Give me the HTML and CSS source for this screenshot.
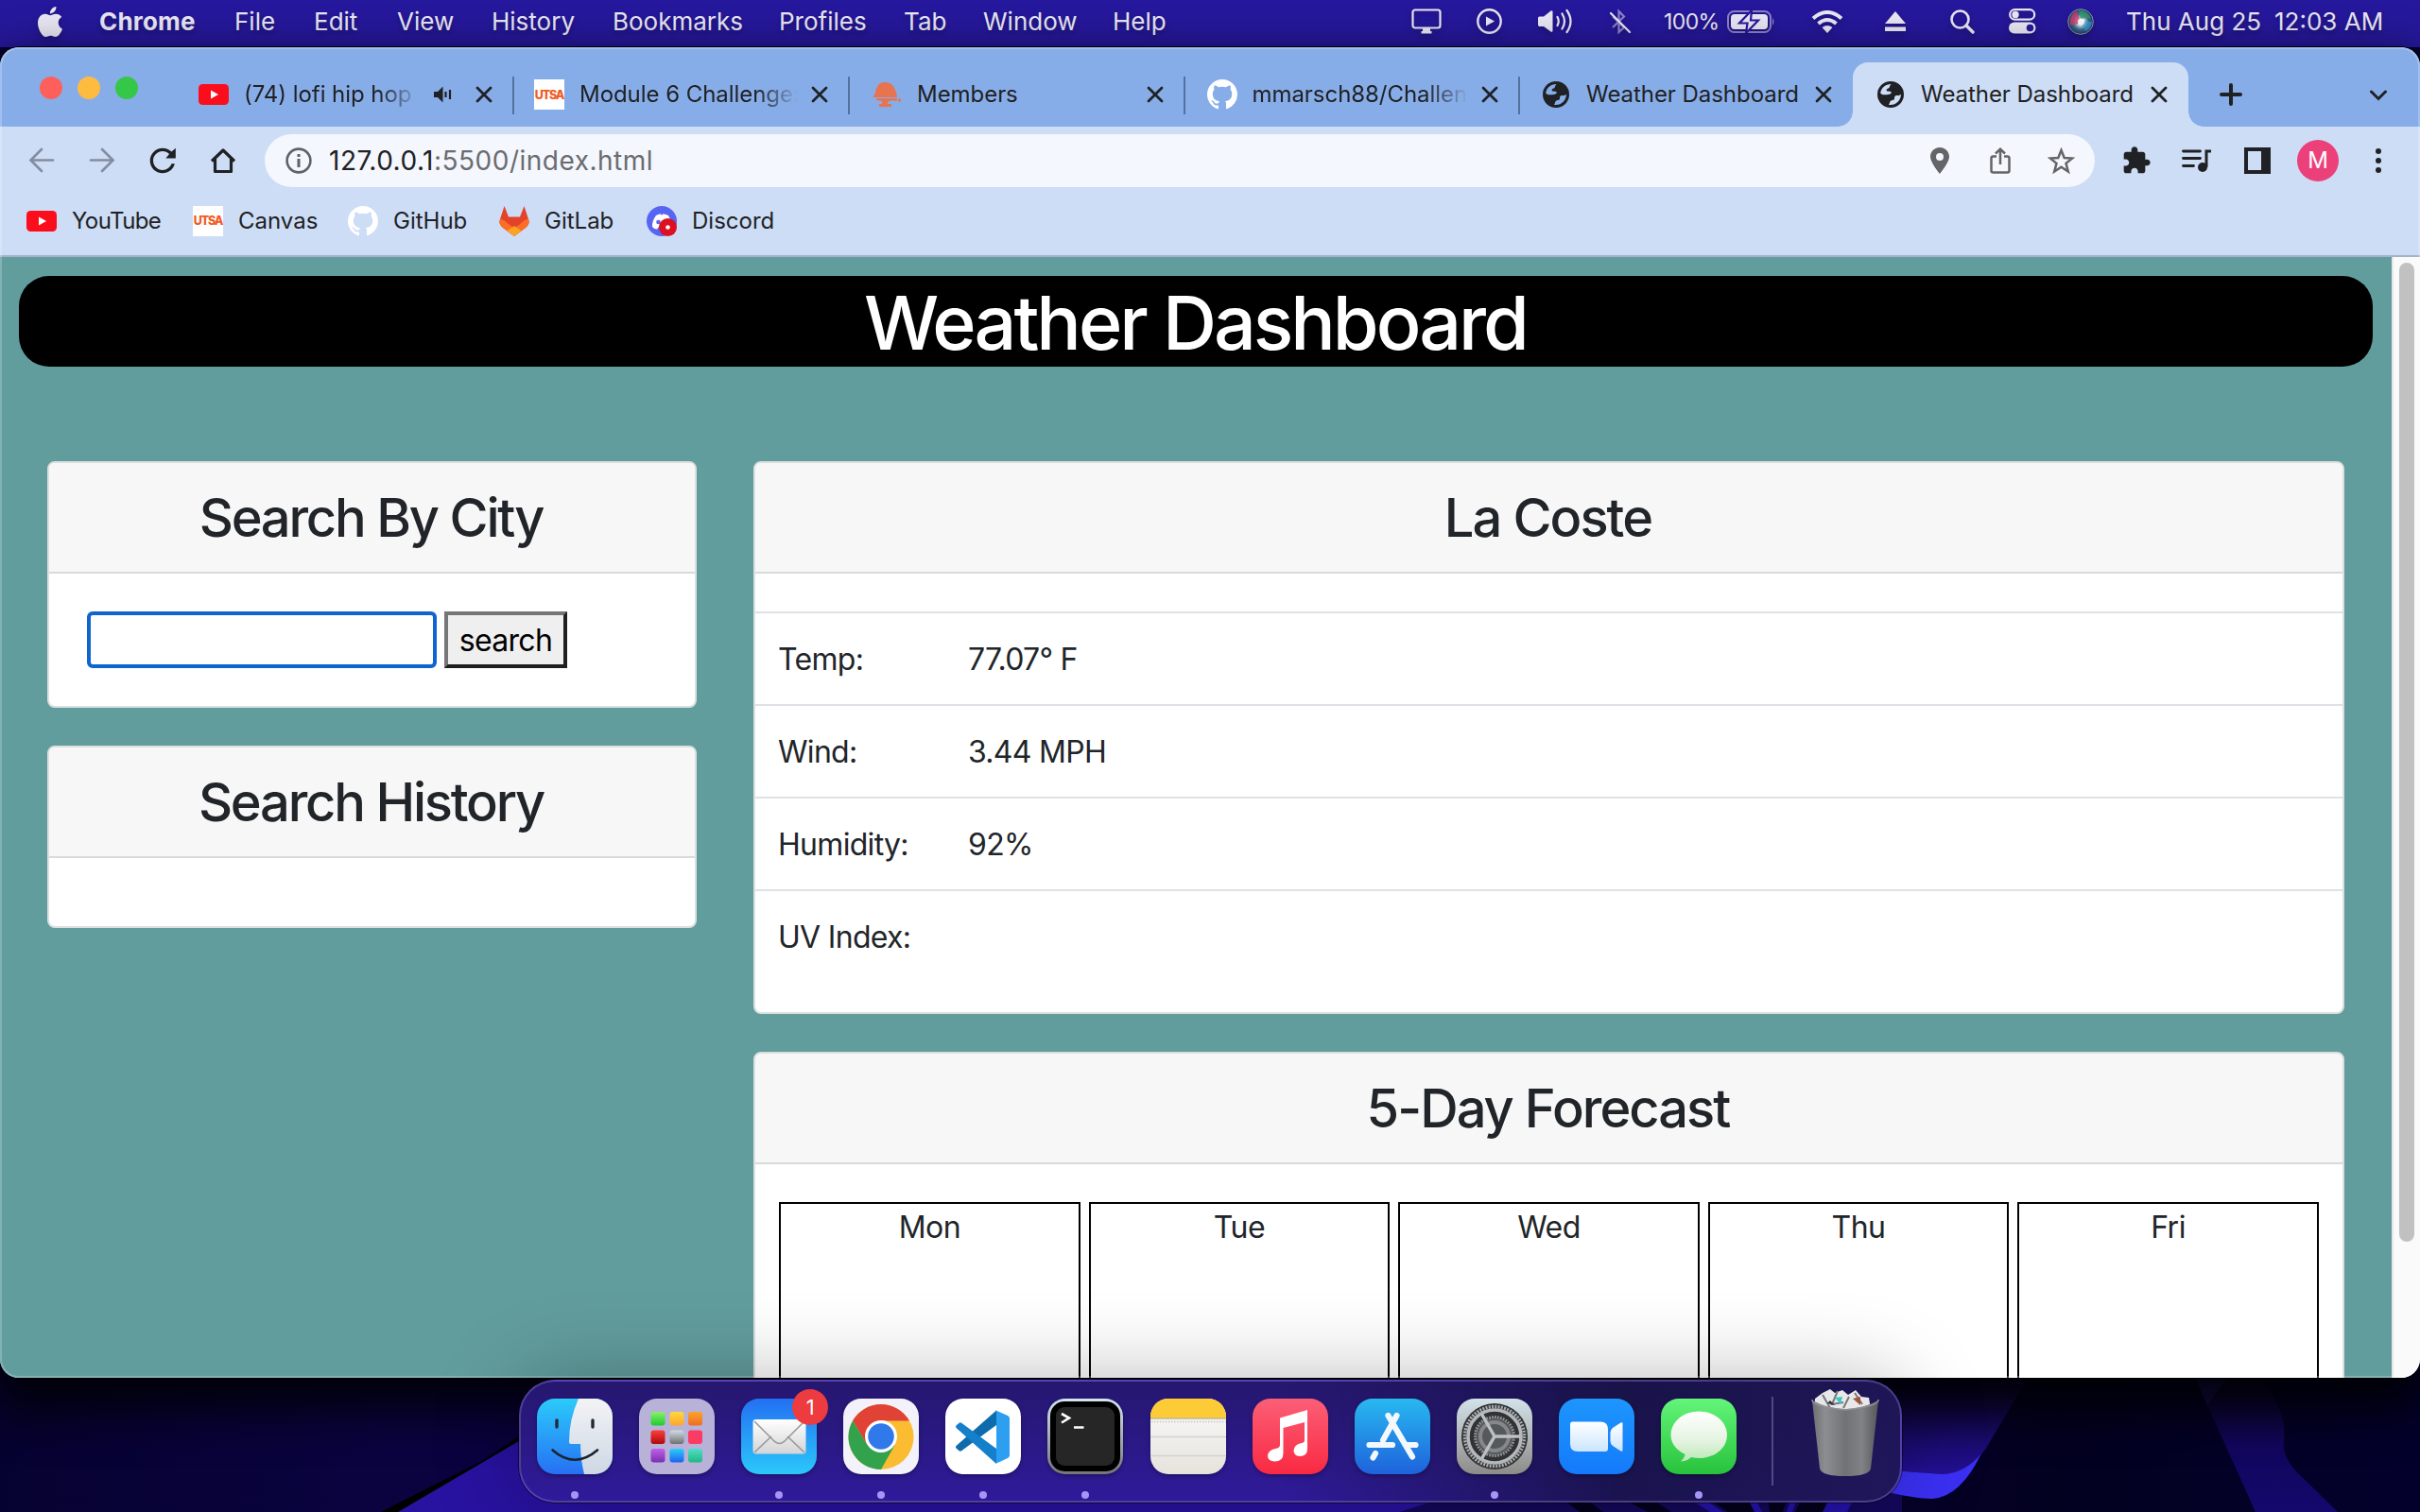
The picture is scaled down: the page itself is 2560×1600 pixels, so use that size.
FILE: index.html
```html
<!DOCTYPE html>
<html lang="en">
<head>
<meta charset="utf-8">
<title>Weather Dashboard</title>
<link rel="stylesheet" href="styles.css">
</head>
<body>
<svg class="defs" width="0" height="0" aria-hidden="true">
  <defs>
    <linearGradient id="g-violet" x1="0" y1="0" x2="0" y2="1"><stop offset="0" stop-color="#080324"/><stop offset="1" stop-color="#241096"/></linearGradient>
    <linearGradient id="g-band" x1="0" y1="0" x2="0" y2="1"><stop offset="0" stop-color="#0a0424"/><stop offset=".5" stop-color="#11065c"/><stop offset="1" stop-color="#14086c"/></linearGradient>
    <linearGradient id="g-finder" x1="0" y1="0" x2="0" y2="1"><stop offset="0" stop-color="#2bcbfb"/><stop offset="1" stop-color="#2670f3"/></linearGradient>
    <linearGradient id="g-face" x1="0" y1="0" x2="0" y2="1"><stop offset="0" stop-color="#f3f3f5"/><stop offset="1" stop-color="#cdd8e4"/></linearGradient>
    <linearGradient id="g-paper" x1="0" y1="0" x2="0" y2="1"><stop offset="0" stop-color="#ffffff"/><stop offset="1" stop-color="#d4d4d6"/></linearGradient>
    <linearGradient id="g-bubble" x1="0" y1="0" x2="0" y2="1"><stop offset="0" stop-color="#ffffff"/><stop offset=".6" stop-color="#e4f3e0"/><stop offset="1" stop-color="#b9e8b4"/></linearGradient>
    <linearGradient id="g-cam" x1="0" y1="0" x2="0" y2="1"><stop offset="0" stop-color="#ffffff"/><stop offset="1" stop-color="#cbe5ff"/></linearGradient>
    <linearGradient id="g-bin" x1="0" y1="0" x2="1" y2="0"><stop offset="0" stop-color="#6d6f73"/><stop offset=".2" stop-color="#8c8e92"/><stop offset=".5" stop-color="#707276"/><stop offset=".75" stop-color="#808286"/><stop offset="1" stop-color="#55575b"/></linearGradient>
    <linearGradient id="g-green" x1="0" y1="0" x2="0" y2="1"><stop offset="0" stop-color="#8af06b"/><stop offset="1" stop-color="#1ecb2f"/></linearGradient>
    <linearGradient id="g-yellow" x1="0" y1="0" x2="0" y2="1"><stop offset="0" stop-color="#ffd83c"/><stop offset="1" stop-color="#fba72a"/></linearGradient>
    <linearGradient id="g-orange" x1="0" y1="0" x2="0" y2="1"><stop offset="0" stop-color="#fba32b"/><stop offset="1" stop-color="#ee6d24"/></linearGradient>
    <linearGradient id="g-red" x1="0" y1="0" x2="0" y2="1"><stop offset="0" stop-color="#fb3f3c"/><stop offset="1" stop-color="#b00a0c"/></linearGradient>
    <linearGradient id="g-gray" x1="0" y1="0" x2="0" y2="1"><stop offset="0" stop-color="#cfdde4"/><stop offset="1" stop-color="#707070"/></linearGradient>
    <linearGradient id="g-purple" x1="0" y1="0" x2="0" y2="1"><stop offset="0" stop-color="#c060e8"/><stop offset="1" stop-color="#7a30b0"/></linearGradient>
    <linearGradient id="g-blue" x1="0" y1="0" x2="0" y2="1"><stop offset="0" stop-color="#27d0fb"/><stop offset="1" stop-color="#2060ee"/></linearGradient>
    <linearGradient id="g-teal" x1="0" y1="0" x2="0" y2="1"><stop offset="0" stop-color="#52dcc8"/><stop offset="1" stop-color="#20b882"/></linearGradient>
    <radialGradient id="g-siri"><stop offset="0" stop-color="#ffffff"/><stop offset=".3" stop-color="#c8dce8"/><stop offset=".6" stop-color="#3c6f98"/><stop offset="1" stop-color="#1d3a4a"/></radialGradient>
  </defs>
  <symbol id="i-close" viewBox="0 0 18 18"><path d="M2 2l14 14M16 2L2 16" fill="none" stroke="#202124" stroke-width="2.8" stroke-linecap="round"/></symbol>
  <symbol id="i-youtube" viewBox="0 0 32 22"><rect width="32" height="22" rx="4.5" fill="#fc0d1b"/><path d="M13 6.5l8 4.5-8 4.5z" fill="#fff"/></symbol>
  <symbol id="i-github" viewBox="0 0 16 16"><path fill="#fff" d="M8 0C3.58 0 0 3.58 0 8c0 3.54 2.29 6.53 5.47 7.59.4.07.55-.17.55-.38 0-.19-.01-.82-.01-1.49-2.01.37-2.53-.49-2.69-.94-.09-.23-.48-.94-.82-1.13-.28-.15-.68-.52-.01-.53.63-.01 1.08.58 1.23.82.72 1.21 1.87.87 2.33.66.07-.52.28-.87.51-1.07-1.78-.2-3.64-.89-3.64-3.95 0-.87.31-1.59.82-2.15-.08-.2-.36-1.02.08-2.12 0 0 .67-.21 2.2.82.64-.18 1.32-.27 2-.27s1.36.09 2 .27c1.53-1.04 2.2-.82 2.2-.82.44 1.1.16 1.92.08 2.12.51.56.82 1.27.82 2.15 0 3.07-1.87 3.75-3.65 3.95.29.25.54.73.54 1.48 0 1.07-.01 1.93-.01 2.2 0 .21.15.46.55.38A8.01 8.01 0 0 0 16 8c0-4.42-3.58-8-8-8z"/></symbol>
  <symbol id="i-globe" viewBox="0 0 28 28"><path fill="#202124" fill-rule="evenodd" d="M14 0a14 14 0 1 0 0 28a14 14 0 0 0 0-28zM14.500 3.000C8.500 3 4 7 3.200 12.500C5 14.800 8 14.200 10 14.200C13.500 14.200 15.500 12.600 14.500 11.300C13.500 10.300 10 11.500 9.600 9.500C9.300 7.500 12.500 8 12.800 6.200C13 4.600 14 4 14.500 3zM25 13.500C24 15.500 21.500 15 20.500 15C18.500 15 17.800 16.500 18 18.500C18.200 20.500 14 19.500 13.400 21.500C13 23 12.500 24 12 24.900C19 26 25 20.500 25 13.500z"/></symbol>
</svg>

<div class="desktop">
  <svg class="wallpaper" viewBox="0 1440 2560 160" width="2560" height="160">
    <path d="M403 1600L450 1576Q490 1556 510 1546L640 1460L640 1600z" fill="#000"/>
    <path d="M421 1600L547 1526L660 1458H1700V1600z" fill="#2812a0"/>
    <path d="M1480 1600L1640 1550H2012V1600z" fill="#14085a"/>
    <path d="M1655 1588h25l16 12h-25zM1720 1588h30l18 12h-25zM1810 1588h40l8 12h-30zM1870 1588h20l-4 12h-14zM1905 1588h30l-6 12h-30z" fill="#04021c"/>
    <path d="M1790 1588h15l18 12h-14zM1850 1588h8l6 12h-8zM1894 1588h6l-4 12h-6zM1934 1588h26l-6 12h-26z" fill="#2412a8"/>
    <path d="M1960 1450H2150L2100 1534Q2080 1560 2056 1560L1960 1553z" fill="url(#g-violet)"/>
    <path d="M1960 1553L2056 1560Q2080 1558 2096 1538Q2074 1584 2044 1586Q2020 1586 1960 1570z" fill="#3b30f4"/>
    <path d="M2322 1458L2386 1600H2473L2428 1556Q2414 1540 2416 1526C2418 1505 2415 1492 2392 1458z" fill="url(#g-band)"/>
    <path d="M2322 1458H2356L2335 1487z" fill="#151050"/>
  </svg>

  <header class="menubar">
    <svg class="apple" viewBox="0 0 24 24"><path fill="#e9e7f5" d="M12.152 6.896c-.948 0-2.415-1.078-3.96-1.04-2.04.027-3.91 1.183-4.961 3.014-2.117 3.675-.546 9.103 1.519 12.09 1.013 1.454 2.208 3.09 3.792 3.039 1.52-.065 2.09-.987 3.935-.987 1.831 0 2.35.987 3.96.948 1.637-.026 2.676-1.48 3.676-2.948 1.156-1.688 1.636-3.325 1.662-3.415-.039-.013-3.182-1.221-3.22-4.857-.026-3.04 2.48-4.494 2.597-4.559-1.429-2.09-3.623-2.324-4.39-2.376-2-.156-3.675 1.09-4.61 1.09zM15.53 3.83c.843-1.012 1.4-2.427 1.245-3.83-1.207.052-2.662.805-3.532 1.818-.78.896-1.454 2.338-1.273 3.714 1.338.104 2.715-.688 3.559-1.701"/></svg>
    <nav class="menus">
      <span class="app-name">Chrome</span><span>File</span><span>Edit</span><span>View</span><span>History</span><span>Bookmarks</span><span>Profiles</span><span>Tab</span><span>Window</span><span>Help</span>
    </nav>
    <div class="status">
      <svg width="32" height="27" viewBox="0 0 32 27"><rect x="1.500" y="1.500" width="29" height="19" rx="2.500" fill="none" stroke="#e9e7f5" stroke-width="2.200"/><path d="M12 21h8v3h1.500v2.500h-11V24H12z" fill="#e9e7f5"/></svg>
      <svg width="27" height="27" viewBox="0 0 27 27"><circle cx="13.500" cy="13.500" r="12.200" fill="none" stroke="#e9e7f5" stroke-width="2.400"/><path d="M10 8.500l9 5-9 5z" fill="#e9e7f5"/></svg>
      <svg width="38" height="27" viewBox="0 0 38 27"><path d="M1 10q0-1.500 1.500-1.500H7l7.500-6q2-1 2 1v20q0 2-2 1L7 19H2.500Q1 19 1 17z" fill="#e9e7f5"/><path d="M21.500 9q2.500 4.500 0 9M26.500 5.500q5 8 0 16M31.500 2q8 11.500 0 23" fill="none" stroke="#e9e7f5" stroke-width="2.200" stroke-linecap="round"/></svg>
      <svg width="24" height="28" viewBox="0 0 24 28"><path d="M4 20L16 8.500L10.500 3V25L16 20L4 8.500" fill="none" stroke="#8a80cc" stroke-width="2.200"/><path d="M2 5l20 20" stroke="#e9e7f5" stroke-width="2.200" stroke-linecap="round"/></svg>
      <span class="percent">100%</span>
      <svg width="52" height="24" viewBox="0 0 52 24"><rect x="1" y="1" width="45" height="22" rx="6.500" fill="none" stroke="#8a80cc" stroke-width="2"/><rect x="4" y="4" width="39" height="16" rx="4" fill="#e9e7f5"/><path d="M48 8q3 4 0 8z" fill="#8a80cc"/><path d="M26 0L13 13.500h8.500L20 24 33 10.500h-8z" fill="#e9e7f5" stroke="#26189c" stroke-width="2.200"/></svg>
      <svg width="34" height="24" viewBox="0 0 34 24"><g fill="none" stroke="#e9e7f5" stroke-width="4"><path d="M2 8.500q15-13 30 0"/><path d="M7.500 14q9.500-8 19 0"/></g><path d="M11.500 18q5.500-4 11 0L17 24z" fill="#e9e7f5"/></svg>
      <svg width="24" height="22" viewBox="0 0 24 22"><path d="M12 0l11 13H1zM1 16.500h22V21H1z" fill="#e9e7f5"/></svg>
      <svg width="26" height="26" viewBox="0 0 26 26"><circle cx="10.500" cy="10.500" r="9" fill="none" stroke="#e9e7f5" stroke-width="2.600"/><path d="M17 17l7 7" stroke="#e9e7f5" stroke-width="3.400" stroke-linecap="round"/></svg>
      <svg width="29" height="27" viewBox="0 0 29 27"><rect x="1.200" y="1.200" width="26" height="10.400" rx="5.200" fill="none" stroke="#e9e7f5" stroke-width="2.200"/><circle cx="7" cy="6.400" r="3.700" fill="#e9e7f5"/><rect x="0" y="14.500" width="28.500" height="12" rx="6" fill="#e9e7f5"/><circle cx="22.500" cy="20.500" r="3.800" fill="#26189c"/></svg>
      <svg width="28" height="28" viewBox="0 0 28 28"><circle cx="14" cy="14" r="13.500" fill="url(#g-siri)"/><path d="M3 17Q1 7 10 2.500Q12 8 14 14Q8 19 3 17z" fill="#d63a6c" opacity=".75"/><path d="M12 2Q22 2 25 11Q19 8 14 12z" fill="#2f9a6a" opacity=".8"/><path d="M14 14l12 0q-1 8-7 10z" fill="#3aa5e0" opacity=".6"/><circle cx="14.500" cy="14" r="3.500" fill="#fff" opacity=".9"/><circle cx="14" cy="14" r="13.300" fill="none" stroke="#8f8fc4" stroke-width="1"/></svg>
      <span class="clock-day">Thu Aug 25</span>
      <span class="clock-time">12:03 AM</span>
    </div>
  </header>

  <main class="window">
    <div class="tabstrip">
      <div class="lights"><i class="red"></i><i class="amber"></i><i class="green"></i></div>
      <div class="tabs">
        <div class="tab"><svg class="fav" width="32" height="22"><use href="#i-youtube"/></svg><span class="tab-title fade">(74) lofi hip hop</span><svg class="audio" width="20" height="18" viewBox="0 0 20 18"><path d="M1 6h4l5.500-5.500v17L5 12H1z" fill="#202124"/><path d="M13.500 6v6M18 4v10" stroke="#202124" stroke-width="2.200"/></svg><svg class="x" width="18" height="18"><use href="#i-close"/></svg></div>
        <div class="tab"><span class="utsa fav">UTSA</span><span class="tab-title fade">Module 6 Challenge:</span><svg class="x" width="18" height="18"><use href="#i-close"/></svg></div>
        <div class="tab"><svg class="fav" width="32" height="28" viewBox="0 0 32 28"><path d="M4 13Q4 9 5 8Q7 1 14 1Q22 1 24.500 8Q27 13 27 17H2Q1 16 4 13zM5 18h22v2.500h-7L17 22v2h4v3H8v-3h3v-3L5 20zM24 18.500h3v2h-3zM28 18.500h3v3h-3z" fill="#e8734f"/></svg><span class="tab-title">Members</span><svg class="x" width="18" height="18"><use href="#i-close"/></svg></div>
        <div class="tab"><svg class="fav" width="32" height="32"><use href="#i-github"/></svg><span class="tab-title fade">mmarsch88/Challen</span><svg class="x" width="18" height="18"><use href="#i-close"/></svg></div>
        <div class="tab no-sep"><svg class="fav globe" width="28" height="28"><use href="#i-globe"/></svg><span class="tab-title">Weather Dashboard</span><svg class="x" width="18" height="18"><use href="#i-close"/></svg></div>
        <div class="tab active"><svg class="fav globe" width="28" height="28"><use href="#i-globe"/></svg><span class="tab-title">Weather Dashboard</span><svg class="x" width="18" height="18"><use href="#i-close"/></svg></div>
      </div>
      <svg class="new-tab" width="24" height="24" viewBox="0 0 24 24"><path d="M12 2v20M2 12h20" stroke="#202124" stroke-width="4" stroke-linecap="round"/></svg>
      <svg class="tab-search" width="18" height="12" viewBox="0 0 18 12"><path d="M1.500 2L9 9.500 16.500 2" fill="none" stroke="#202124" stroke-width="3" stroke-linecap="round"/></svg>
    </div>

    <div class="toolbar">
      <div class="nav">
        <svg width="28" height="28" viewBox="0 0 28 28"><path d="M26 13.500H3M14 2L2.500 13.500 14 25" fill="none" stroke="#848da0" stroke-width="2.700" stroke-linecap="round"/></svg>
        <svg width="28" height="28" viewBox="0 0 28 28"><path d="M2 13.500h23M14 2l11.500 11.500L14 25" fill="none" stroke="#848da0" stroke-width="2.700" stroke-linecap="round"/></svg>
        <svg width="40" height="40" viewBox="0 0 24 24"><path fill="#202124" d="M17.650 6.350C16.200 4.900 14.210 4 12 4c-4.420 0-7.990 3.580-7.990 8s3.570 8 7.990 8c3.730 0 6.840-2.550 7.730-6h-2.080c-.82 2.330-3.040 4-5.650 4-3.310 0-6-2.690-6-6s2.690-6 6-6c1.660 0 3.140.69 4.220 1.780L14 10.500h6.300V4z"/></svg>
        <svg width="28" height="28" viewBox="0 0 28 28"><path d="M2 14.500L14 3l12 11.500M5.500 12v13.500h17V12" fill="none" stroke="#202124" stroke-width="3.200" stroke-linejoin="round"/></svg>
      </div>
      <div class="omnibox">
        <svg width="28" height="28" viewBox="0 0 28 28"><circle cx="14" cy="14" r="12.400" fill="none" stroke="#5f6368" stroke-width="2.600"/><path d="M14 12v9M14 7v3" stroke="#5f6368" stroke-width="3"/></svg>
        <div class="url"><span class="host">127.0.0.1</span>:5500/index.html</div>
        <div class="omni-actions">
          <svg width="20" height="28" viewBox="0 0 20 28"><path fill-rule="evenodd" fill="#646566" d="M10 0C4.500 0 0 4.300 0 9.800C0 16 10 28 10 28s10-12 10-18.200C20 4.300 15.500 0 10 0zm0 6a4 4 0 1 1 0 8 4 4 0 0 1 0-8z"/></svg>
          <svg width="22" height="28" viewBox="0 0 22 28"><path d="M7 9.500H3.500Q1.500 9.500 1.500 11.500V24.500Q1.500 26.500 3.500 26.500H18.500Q20.500 26.500 20.500 24.500V11.500Q20.500 9.500 18.500 9.500H15M11 18V2.500M6 6.500L11 1.800 16 6.500" fill="none" stroke="#646566" stroke-width="2.500"/></svg>
          <svg width="29" height="28" viewBox="0 0 29 28"><path d="M14.500 3l3.200 8 8.500.5-6.700 5.400 2.300 8.600-7.300-4.800-7.300 4.800 2.300-8.600L2.800 11.500l8.500-.5z" fill="none" stroke="#646566" stroke-width="2.500"/></svg>
        </div>
      </div>
      <div class="extras">
        <svg width="32" height="32" viewBox="0 0 24 24"><path fill="#202124" d="M20.500 11H19V7c0-1.100-.9-2-2-2h-4V3.500C13 2.120 11.880 1 10.500 1S8 2.120 8 3.500V5H4c-1.100 0-1.990.9-1.990 2v3.800H3.500c1.490 0 2.700 1.210 2.700 2.700s-1.210 2.700-2.700 2.700H2V20c0 1.100.9 2 2 2h3.800v-1.500c0-1.490 1.210-2.700 2.700-2.700 1.490 0 2.700 1.210 2.700 2.700V22H17c1.100 0 2-.9 2-2v-4h1.500c1.380 0 2.500-1.120 2.500-2.500S21.880 11 20.500 11z"/></svg>
        <svg width="32" height="26" viewBox="0 0 32 26"><path d="M1.500 3h18M1.500 10.500h18M1.500 18.500h11" stroke="#202124" stroke-width="2.800" stroke-linecap="round"/><path d="M26 20V3h5" fill="none" stroke="#202124" stroke-width="3"/><circle cx="22" cy="20" r="5" fill="#202124"/></svg>
        <svg width="28" height="28" viewBox="0 0 28 28"><path fill="#202124" fill-rule="evenodd" d="M0 0h28v28H0zM4 4v20h14V4z"/></svg>
        <span class="avatar">M</span>
        <svg width="6" height="28" viewBox="0 0 6 28"><circle cx="3" cy="4" r="3"/><circle cx="3" cy="14" r="3"/><circle cx="3" cy="24" r="3"/></svg>
      </div>
    </div>

    <div class="bookmarks">
      <div><svg width="32" height="22"><use href="#i-youtube"/></svg><span class="tight">YouTube</span></div>
      <div><span class="utsa">UTSA</span><span>Canvas</span></div>
      <div><svg width="32" height="32"><use href="#i-github"/></svg><span>GitHub</span></div>
      <div><svg width="32" height="32" viewBox="0 0 32 32"><path d="M5.500 0L10 11.500H22L26.500 0 31 14q2 5-3 9L16 32 4 23Q-1 19 1 14z" fill="#e24329"/><path d="M1 14Q5 14 8.500 18L16 23.500 23.500 18Q27 14 31 14q2 5-3 9L16 32 4 23Q-1 19 1 14z" fill="#fc6d26"/><path d="M8.500 26.300L16 21l7.500 5.300L16 32z" fill="#fca326"/></svg><span>GitLab</span></div>
      <div><svg width="32" height="32" viewBox="0 0 32 32"><circle cx="16" cy="16" r="16" fill="#5865f2"/><path d="M10 10q3-2 5-1.500l1 1.500 1-1.500q3-.5 6 1.500 3.500 6 3 12-3 3-5.500 2.500L19 22h-6l-2 2.500Q8 24.500 6 22 5.500 16 10 10z" fill="#fff"/><circle cx="12.500" cy="17" r="2.300" fill="#5865f2"/><circle cx="22.500" cy="22.500" r="9.500" fill="#dc1020"/><circle cx="22.500" cy="22.500" r="2.300" fill="#fff"/></svg><span>Discord</span></div>
    </div>

    <div class="viewport">
      <div class="page">
        <h1>Weather Dashboard</h1>
        <div class="columns">
          <aside class="stack">
            <section class="card">
              <h2>Search By City</h2>
              <form class="search"><input class="city" type="text"><button class="go" type="button">search</button></form>
            </section>
            <section class="card history"><h2>Search History</h2></section>
          </aside>
          <div class="stack">
            <section class="card">
              <h2 class="wide">La Coste</h2>
              <dl class="readings">
                <div><dt>Temp:</dt><dd>77.07° F</dd></div>
                <div><dt>Wind:</dt><dd>3.44 MPH</dd></div>
                <div><dt>Humidity:</dt><dd>92%</dd></div>
                <div><dt>UV Index:</dt><dd></dd></div>
              </dl>
            </section>
            <section class="card">
              <h2 class="wide">5-Day Forecast</h2>
              <div class="days"><div>Mon</div><div>Tue</div><div>Wed</div><div>Thu</div><div>Fri</div></div>
            </section>
          </div>
        </div>
      </div>
      <div class="scrollbar"><i></i></div>
    </div>
  </main>

  <footer class="dock">
    <div class="app on"><svg class="tile" viewBox="0 0 80 80"><rect width="80" height="80" fill="url(#g-finder)"/><path d="M44 0Q34 22 34 46Q34 48 36 48H46Q46 64 50 80H80V0z" fill="url(#g-face)"/><path d="M21 23v7M59 23v7" stroke="#222a38" stroke-width="3.400" stroke-linecap="round"/><path d="M16.500 54.500Q40 75 64 54.500" fill="none" stroke="#1c2430" stroke-width="2.600" stroke-linecap="round"/></svg></div>
    <div class="app"><svg class="tile launchpad" viewBox="0 0 80 80"><rect x="12.500" y="14" width="15" height="14.500" rx="3" fill="url(#g-green)"/><rect x="32.500" y="14" width="15" height="14.500" rx="3" fill="url(#g-yellow)"/><rect x="52" y="14" width="15" height="14.500" rx="3" fill="url(#g-orange)"/><rect x="12.500" y="33.500" width="15" height="14.500" rx="3" fill="url(#g-red)"/><rect x="32.500" y="33.500" width="15" height="14.500" rx="3" fill="url(#g-gray)"/><rect x="52" y="33.500" width="15" height="14.500" rx="3" fill="#fb3c62"/><rect x="12.500" y="53" width="15" height="14.500" rx="3" fill="url(#g-purple)"/><rect x="32.500" y="53" width="15" height="14.500" rx="3" fill="url(#g-blue)"/><rect x="52" y="53" width="15" height="14.500" rx="3" fill="url(#g-teal)"/></svg></div>
    <div class="app on"><svg class="tile mail" viewBox="0 0 80 80"><rect x="12.500" y="22" width="56" height="36.500" rx="3" fill="url(#g-paper)"/><path d="M14 57L32 40M67 57L49 40M14 24L34 44Q40.500 51 47 44L67 24" fill="none" stroke="#9a9a9e" stroke-width="1.600"/></svg><span class="badge">1</span></div>
    <div class="app on"><svg class="tile chrome" viewBox="0 0 80 80"><circle cx="40" cy="40.500" r="34.500" fill="#fbbc31"/><path d="M40 23.500H69.900A34.500 34.500 0 0 0 10.100 23.300L25.300 49z" fill="#e04236"/><path d="M10.100 23.300A34.500 34.500 0 0 0 40 75L54.700 49L25.300 49z" fill="#33a24c"/><circle cx="40" cy="40" r="17" fill="#fff"/><circle cx="40" cy="40" r="13.800" fill="#3079ea"/></svg></div>
    <div class="app on"><svg class="tile vscode" viewBox="0 0 80 80"><path d="M54 12.500L11.500 50Q10.500 51.500 12 53L15 55.500Q16 56 17.500 55L54 28z" fill="#0e6bac"/><path d="M54 69L11.500 31Q10.500 29 12 28L15 25.500Q16 25 17.500 26L54 53z" fill="#147fca"/><path d="M53 12.300L66 18Q68 19 68 21V60Q68 62 66 63L53 69Q54 69 54 66V15z" fill="#2c9ff0"/></svg></div>
    <div class="app on"><svg class="tile terminal" viewBox="0 0 80 80"><rect x="3" y="3" width="74" height="74" rx="15" fill="#000"/><rect x="9" y="9" width="62" height="62" rx="9" fill="#262626"/><path d="M15 16l8 4.500-8 5M28 30.500h10.500" fill="none" stroke="#fff" stroke-width="2.600"/></svg></div>
    <div class="app"><svg class="tile notes" viewBox="0 0 80 80"><rect width="80" height="20.500" fill="#fdcb35"/><path d="M0 21h80" stroke="#a9985e" stroke-width="1.200"/><path d="M1 24.500h79" stroke="#c4c4c4" stroke-width="1.600" stroke-dasharray="1.400 1.600"/><path d="M0 40.500h80M0 60.500h80" stroke="#d2d2d2" stroke-width="1.500"/></svg></div>
    <div class="app"><svg class="tile music" viewBox="0 0 80 80"><path d="M29 20.500L58 12V53Q58 61 50 61Q43.500 60.500 43.500 55Q44 48.500 52 47Q55 46.500 55 44V25L32.500 31V58Q32.500 66.500 23.500 66.500Q16 66 16 60.500Q16.500 54.500 24 53Q29 52.500 29 49z" fill="#fff"/></svg></div>
    <div class="app"><svg class="tile store" viewBox="0 0 80 80"><g stroke="#f3f8fd" stroke-width="6.200" stroke-linecap="round"><path d="M44.500 18L30 44M22 58l-2.500 4.500M35.500 18L61 61.500M15.500 49H40M56 49h8.500"/></g></svg></div>
    <div class="app on"><svg class="tile settings" viewBox="0 0 80 80"><circle cx="40" cy="40" r="35" fill="#303234"/><circle cx="40" cy="40" r="31.500" fill="none" stroke="#a8acae" stroke-width="3.500" stroke-dasharray="2 1.300"/><circle cx="40" cy="40" r="28" fill="none" stroke="#b4b8ba" stroke-width="3.600"/><circle cx="40" cy="40" r="20" fill="#56595b"/><circle cx="40" cy="40" r="20.500" fill="none" stroke="#8f9294" stroke-width="3" stroke-dasharray="1.800 1.200"/><circle cx="40" cy="40" r="15" fill="none" stroke="#84888a" stroke-width="4"/><path d="M40 40H67M40 40L26.500 16.500M40 40L26.500 63.500" stroke="#bcc0c2" stroke-width="3.500"/></svg></div>
    <div class="app"><svg class="tile zoom" viewBox="0 0 80 80"><path d="M12 27q0-2.500 2.500-2.500H44q8 0 8 8V53q0 3-3 3H20q-8 0-8-8z" fill="url(#g-cam)"/><path d="M54.500 36Q54.500 33 57 31L65.500 25.500q2-1 2 1V54.500q0 2-2 1L57 50Q54.500 48 54.500 45z" fill="url(#g-cam)"/></svg></div>
    <div class="app on"><svg class="tile messages" viewBox="0 0 80 80"><path d="M40 13.500c17 0 30 11 30 25S57 63 40 63q-4 0-8-1-4 4-11 4.500 4-4 4.500-7.500C16 54.500 10.500 47 10.500 38.500c0-14 13-25 29.500-25z" fill="url(#g-bubble)"/></svg></div>
    <i class="divider"></i>
    <svg class="trash" width="76" height="96" viewBox="0 0 76 96"><path d="M6 12L14 6l8-4 5 4 8-3 6 5 8-5 6 7 8 1 2 12-60 4z" fill="#e8e8ea"/><path d="M14 8l8 14M30 4l-6 14 12-2M48 6l8 12M42 10l-6 12" stroke="#77787c" stroke-width="2" fill="none"/><path d="M27 11l8-1-2 8z" fill="#3ac8c0"/><path d="M46 12l8-2 0 9z" fill="#a0543a"/><path d="M22 14l5 5-8-2z" fill="#303034"/><path d="M3 14Q38 32 73 14L65 86Q63 94 38 94Q13 94 11 86z" fill="url(#g-bin)"/><path d="M3 13Q2 20 38 24Q74 20 73 13" fill="none" stroke="#8f9195" stroke-width="1.500"/></svg>
  </footer>
</div>
</body>
</html>
```
FILE: styles.css
```css
* { box-sizing: border-box; }

body {
  margin: 0;
  font-family: Inter, "Liberation Sans", sans-serif;
  color: #212529;
}

svg { display: block; flex: none; }
.defs { position: absolute; }

.desktop {
  position: relative;
  width: 2560px;
  height: 1600px;
  overflow: hidden;
  background: linear-gradient(90deg, #060230, #0a0340 16%, #0a0340 60%, #030120 85%, #03012c);
}
.wallpaper { position: absolute; left: 0; bottom: 0; }

/* menu bar */
.menubar {
  position: relative;
  display: flex;
  align-items: center;
  height: 50px;
  padding: 0 37px 5px 37px;
  background: #26189c;
  color: #e9e7f5;
  font-size: 26px;
  line-height: 30px;
  text-shadow: 0 3px 5px rgba(0, 0, 0, .3);
  white-space: nowrap;
}
.menubar svg { filter: drop-shadow(0 3px 3px rgba(0, 0, 0, .25)); }
.apple { width: 32px; height: 32px; }
.menus {
  display: grid;
  grid-template-columns: 143px 84px 88px 100px 128px 176px 132px 84px 137px 80px;
  margin-left: 36px;
}
.app-name { font-weight: 700; letter-spacing: .2px; }
.status {
  display: grid;
  grid-template-columns: 69px 64px 76px 58px 67px 89px 77px 70px 62px 62px 62px 157px 117px;
  align-items: center;
  margin-left: auto;
}
.percent { font-size: 23px; letter-spacing: -.6px; }

/* browser window */
.window {
  position: relative;
  display: flex;
  flex-direction: column;
  height: 1408px;
  border-radius: 20px;
  overflow: hidden;
  background: #cdddf6;
  box-shadow: 0 0 0 1px #000, 0 24px 50px 10px rgba(0, 0, 0, .85);
}
.window::after {
  content: "";
  position: absolute;
  inset: 0;
  border-radius: 20px;
  box-shadow: inset 0 0 0 2px rgba(255, 255, 255, .22);
  pointer-events: none;
}
.tabstrip {
  display: flex;
  height: 84px;
  padding-top: 16px;
  background: #87ade9;
}
.lights { display: flex; gap: 16px; width: 188px; padding: 15px 0 0 42px; }
.lights i { width: 24px; height: 24px; border-radius: 50%; }
.red { background: #fd605b; }
.amber { background: #fdbc40; }
.green { background: #34c748; }
.tabs { display: grid; grid-template-columns: 355px 355px 354.500px 354.500px 353px 355px; }
.tab {
  position: relative;
  display: flex;
  align-items: center;
  height: 68px;
  padding: 0 22px;
  font-size: 24px;
  color: #202124;
}
.tab:nth-child(n+3) { padding-left: 24px; }
.tab:nth-child(5) { padding-left: 23px; }
.tab:not(.no-sep):not(.active)::after {
  content: "";
  position: absolute;
  right: -1px;
  top: 15px;
  width: 2px;
  height: 40px;
  background: #56709c;
}
.globe { margin: 0 2px; }
.tab-title { flex: 1; margin: 0 14px 0 16px; white-space: nowrap; overflow: hidden; line-height: 34px; letter-spacing: -.05px; }
.fade {
  -webkit-mask-image: linear-gradient(90deg, #000 calc(100% - 44px), transparent);
  mask-image: linear-gradient(90deg, #000 calc(100% - 44px), transparent);
}
.audio { margin-right: 25px; }
.active { background: #cdddf6; border-radius: 16px 16px 0 0; }
.active::before, .active::after {
  content: "";
  position: absolute;
  bottom: 0;
  width: 16px;
  height: 16px;
}
.active::before { left: -16px; background: radial-gradient(circle at 0 0, transparent 15.500px, #cdddf6 16px); }
.active::after { right: -16px; background: radial-gradient(circle at 100% 0, transparent 15.500px, #cdddf6 16px); }
.new-tab { margin: 22px 0 0 33px; }
.tab-search { margin: 29px 35px 0 auto; }

.utsa {
  display: flex;
  align-items: center;
  justify-content: center;
  width: 32px;
  height: 32px;
  background: #fff;
  color: #f15a22;
  font-size: 12.500px;
  font-weight: 800;
  letter-spacing: -1.200px;
}

.toolbar { display: flex; align-items: center; height: 72px; padding-left: 12px; }
.nav { display: grid; grid-template-columns: repeat(4, 64px); justify-items: center; align-items: center; }
.omnibox {
  display: flex;
  align-items: center;
  width: 1936px;
  height: 56px;
  margin-left: 12px;
  padding: 0 4px 0 22px;
  border-radius: 28px;
  background: #f4f7fd;
}
.url { margin-left: 18px; font-size: 28px; letter-spacing: .5px; color: #6a6c6f; }
.host { color: #202124; }
.omni-actions { display: grid; grid-template-columns: repeat(3, 64px); justify-items: center; align-items: center; margin-left: auto; }
.extras { display: grid; grid-template-columns: repeat(5, 64px); justify-items: center; align-items: center; margin-left: 12px; fill: #202124; }
.avatar {
  width: 44px;
  height: 44px;
  border-radius: 50%;
  background: #ec407a;
  color: #fff;
  font-size: 24px;
  line-height: 44px;
  text-align: center;
}

.bookmarks {
  display: grid;
  grid-template-columns: 176px 164px 160px 156px 160px;
  height: 66px;
  padding: 0 0 8px 28px;
  border-bottom: 2px solid #a3b1c9;
  font-size: 24px;
  line-height: 28px;
  color: #202124;
}
.bookmarks > div { display: flex; align-items: center; gap: 16px; }
.bookmarks span:last-child { padding-bottom: 1px; }
.tight { letter-spacing: -.6px; }

/* page */
.viewport { display: flex; flex: 1; min-height: 0; }
.page { flex: 1; padding: 20px 20px 0; background: #629d9e; overflow: hidden; }
h1 {
  height: 96px;
  margin: 0;
  padding: 2px 1px 0 0;
  border-radius: 32px;
  background: #000;
  color: #fff;
  font-size: 79px;
  font-weight: 500;
  line-height: 94px;
  letter-spacing: -3px;
  text-align: center;
}
.columns {
  display: grid;
  grid-template-columns: 687px 1683px;
  gap: 60px;
  align-items: start;
  padding: 100px 30px 0;
}
.stack { display: grid; gap: 40px; }
.card {
  border: 2px solid #dcdfdf;
  border-radius: 8px;
  background: #fff;
  overflow: hidden;
}
h2 {
  height: 117px;
  margin: 0;
  padding-right: 2px;
  border-bottom: 2px solid #d9dadb;
  background: #f7f7f7;
  font-size: 56px;
  font-weight: 500;
  line-height: 117px;
  letter-spacing: -2.200px;
  text-align: center;
}
.wide { letter-spacing: -1.950px; }
.search { display: flex; gap: 8px; padding: 40px; }
.city { width: 370px; height: 60px; border: 4px solid #1064cf; border-radius: 6px; outline: none; }
.go {
  width: 130px;
  height: 60px;
  padding: 0;
  border: 4px solid;
  border-color: #767676 #1f1f1f #1f1f1f #767676;
  background: #efefef;
  color: #000;
  font: 32px Inter, "Liberation Sans", sans-serif;
  letter-spacing: -.7px;
}
.history { height: 193px; }
.readings { margin: 0; padding: 40px 0 32px; font-size: 32px; }
.readings > div {
  display: grid;
  grid-template-columns: 201px 1fr;
  height: 98px;
  padding-left: 24px;
  border-top: 2px solid #dee2e6;
  line-height: 98px;
  letter-spacing: -.7px;
}
dd { margin: 0; }
.days { display: grid; grid-template-columns: repeat(5, 1fr); gap: 8.600px; height: 400px; padding: 40px 25px 0; }
.days > div { border: 2px solid #000; font-size: 32px; line-height: 50px; letter-spacing: -.5px; text-align: center; }
.scrollbar { width: 30px; padding: 6px 0 0 6px; border-left: 2px solid #e7e7e7; background: #fafafa; }
.scrollbar i { display: block; width: 16px; height: 1036px; border-radius: 8px; background: #c1c1c1; }

/* dock */
.dock {
  position: relative;
  display: flex;
  gap: 28.100px;
  width: 1463px;
  height: 130px;
  margin: 2px 0 0 549px;
  padding: 18px 18px 18px 17px;
  border: 2px solid rgba(150, 130, 230, .38);
  border-radius: 38px;
  background: linear-gradient(90deg, rgba(20, 16, 60, 0) 55%, rgba(22, 18, 66, .85) 80%, rgba(30, 22, 84, .9)), linear-gradient(#26176f, #2f1a9a);
  box-shadow: 0 0 0 1px rgba(0, 0, 0, .5), 0 0 90px rgba(0, 0, 0, .28);
}
.app { position: relative; width: 80px; height: 80px; }
.app.on::after {
  content: "";
  position: absolute;
  left: 36px;
  bottom: -26px;
  width: 8px;
  height: 8px;
  border-radius: 50%;
  background: #a795f5;
}
.tile { width: 80px; height: 80px; border-radius: 19px; box-shadow: 0 2px 4px rgba(0, 0, 0, .3); }
.launchpad { background: #b8b1d8; }
.mail { background: linear-gradient(#2370f2, #2bc8fb); }
.chrome { background: #f3f2fa; }
.vscode { background: #fff; }
.terminal { background: linear-gradient(#d5e6ee, #76767a); }
.notes { background: linear-gradient(#fafafa, #e6e3dc); }
.music { background: linear-gradient(#fb5f77, #fa2942); }
.store { background: linear-gradient(#28b9f0, #1e62dc); }
.settings { background: linear-gradient(#d3e2ea, #8d8b88); }
.zoom { background: linear-gradient(#1d96fd, #147afb); }
.messages { background: linear-gradient(#63f57a, #28c23c); }
.badge {
  position: absolute;
  left: 54px;
  top: -10px;
  width: 38px;
  height: 38px;
  border-radius: 50%;
  background: #ed3b40;
  color: #fff;
  font-size: 22px;
  line-height: 38px;
  text-align: center;
}
.divider { width: 2px; height: 94px; margin: -2px 0 0 9px; background: rgba(160, 150, 210, .4); }
.trash { margin: -12px 0 0 10px; }
```
